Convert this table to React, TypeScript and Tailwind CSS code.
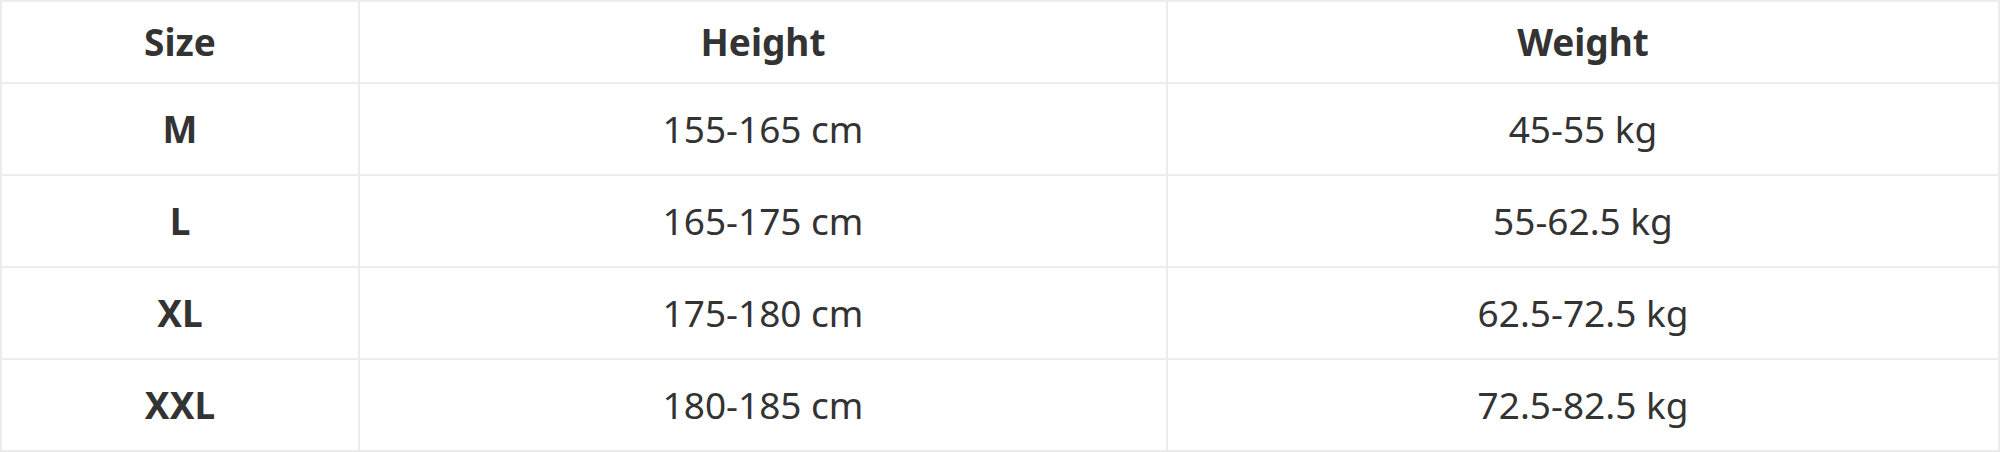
import { Fragment } from "react";

const rows = [
  { size: "M", height: "155-165 cm", weight: "45-55 kg" },
  { size: "L", height: "165-175 cm", weight: "55-62.5 kg" },
  { size: "XL", height: "175-180 cm", weight: "62.5-72.5 kg" },
  { size: "XXL", height: "180-185 cm", weight: "72.5-82.5 kg" },
];

const cell = "flex items-center justify-center border-r-2 border-b-2 border-[#ececec]";

export default function App() {
  return (
    <div className="w-[2000px] bg-white text-[#333333] font-['Noto_Sans','Open_Sans',sans-serif]">
      <div className="grid grid-cols-[358px_808px_832px] border-l-2 border-t-2 border-[#ececec]">
        <div className={`${cell} h-[82px] text-[37px] font-bold`}>Size</div>
        <div className={`${cell} h-[82px] text-[37px] font-bold`}>Height</div>
        <div className={`${cell} h-[82px] text-[37px] font-bold`}>Weight</div>
        {rows.map((r) => (
          <Fragment key={r.size}>
            <div className={`${cell} h-[92px] text-[37px] font-bold`}>{r.size}</div>
            <div className={`${cell} h-[92px] text-[37px]`}>{r.height}</div>
            <div className={`${cell} h-[92px] text-[37px]`}>{r.weight}</div>
          </Fragment>
        ))}
      </div>
    </div>
  );
}
